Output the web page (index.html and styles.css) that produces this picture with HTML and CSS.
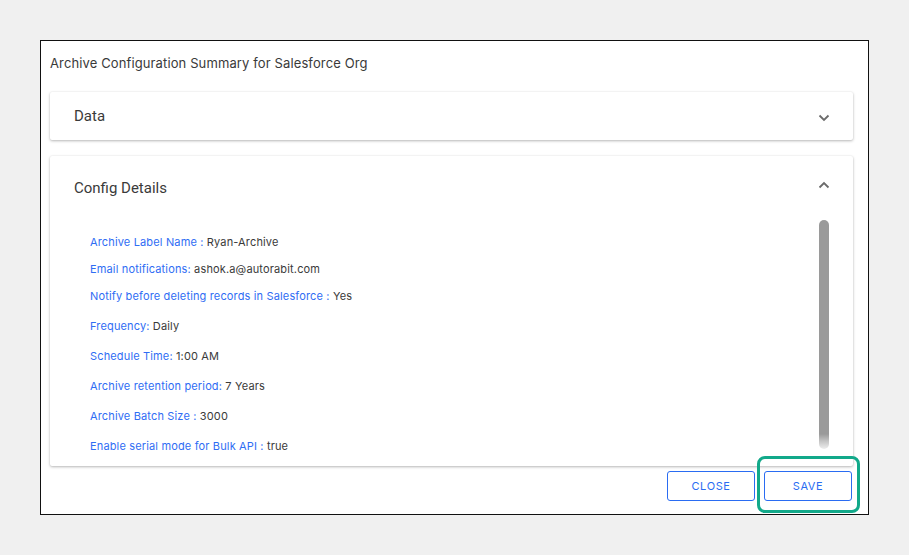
FILE: index.html
```html
<!DOCTYPE html>
<html>
<head>
<meta charset="utf-8">
<link rel="stylesheet" href="styles.css">
</head>
<body>
<div class="dialog">
  <div class="dialog-title">Archive Configuration Summary for Salesforce Org</div>
  <div class="panel panel-data">
    <span class="panel-name">Data</span>
    <svg class="chev" width="12" height="8" viewBox="0 0 12 8"><path d="M1.5 1.5 L6 6 L10.5 1.5" fill="none" stroke="#6b6b6b" stroke-width="1.8"/></svg>
  </div>
  <div class="panel panel-config">
    <div class="config-head">
      <span class="panel-name">Config Details</span>
      <svg class="chev chev-up" width="12" height="8" viewBox="0 0 12 8"><path d="M1.5 6.5 L6 2 L10.5 6.5" fill="none" stroke="#6b6b6b" stroke-width="1.8"/></svg>
    </div>
    <div class="config-body">
      <div class="list">
        <div class="row"><span class="lbl">Archive Label Name : </span>Ryan-Archive</div>
        <div class="row"><span class="lbl">Email notifications: </span>ashok.a@autorabit.com</div>
        <div class="row wide"><span class="lbl">Notify before deleting records in Salesforce : </span>Yes</div>
        <div class="row wide"><span class="lbl">Frequency: </span>Daily</div>
        <div class="row wide"><span class="lbl">Schedule Time: </span>1:00 AM</div>
        <div class="row wide"><span class="lbl">Archive retention period: </span>7 Years</div>
        <div class="row wide"><span class="lbl">Archive Batch Size : </span>3000</div>
        <div class="row wide"><span class="lbl">Enable serial mode for Bulk API : </span>true</div>
      </div>
      <div class="track"><div class="thumb"></div></div>
    </div>
  </div>
  <div class="footer">
    <button class="btn">CLOSE</button>
    <div class="save-wrap">
      <button class="btn">SAVE</button>
      <div class="highlight"></div>
    </div>
  </div>
</div>
</body>
</html>
```
FILE: styles.css
```css
html, body {
  margin: 0;
  padding: 0;
  background: #f0f0f0;
}
body {
  padding: 40px 0 0 40px;
  font-family: Inter, "Noto Sans", sans-serif;
  color: #333;
}
.dialog {
  box-sizing: border-box;
  width: 829px;
  height: 475px;
  background: #fff;
  border: 1px solid #111;
  padding: 14px 15px 0 9px;
  display: flex;
  flex-direction: column;
}
.dialog-title {
  font-size: 13px;
  letter-spacing: 0.12px;
  line-height: 16px;
  color: #3a3a3a;
  margin-bottom: 21px;
}
.panel {
  background: #fff;
  box-shadow: 0 1px 3px rgba(0,0,0,0.28), 0 0 2px rgba(0,0,0,0.06);
  border-radius: 2px;
}
.panel-name {
  font-family: Roboto, sans-serif;
  font-size: 15px;
  color: #3a3a3a;
}
.panel-data {
  height: 48px;
  display: flex;
  align-items: center;
  justify-content: space-between;
  padding: 0 23px 0 24px;
  margin-bottom: 16px;
}
.panel-data .chev { margin-top: 4px; }
.panel-config {
  height: 310px;
  display: flex;
  flex-direction: column;
  overflow: hidden;
}
.config-head {
  height: 64px;
  display: flex;
  align-items: center;
  justify-content: space-between;
  padding: 0 23px 0 24px;
  flex: none;
}
.chev-up { margin-top: -6px; }
.config-body {
  flex: 1;
  display: flex;
  min-height: 0;
}
.list {
  flex: 1;
  padding: 14px 0 0 40px;
  font-size: 11px;
  letter-spacing: 0.15px;
  line-height: 16px;
  color: #3a3a3a;
}
.row { margin-bottom: 11px; white-space: nowrap; }
.row.wide { margin-bottom: 14px; }
.lbl { color: #2f6df4; }
.track {
  width: 10px;
  margin-right: 24px;
  flex: none;
}
.thumb {
  height: 229px;
  border-radius: 5px;
  background: linear-gradient(to bottom, #9a9a9a 0, #9a9a9a 214px, #c4c4c4 221px, #eeeeee 229px);
}
.footer {
  display: flex;
  justify-content: flex-end;
  gap: 9px;
  margin-top: 5px;
  padding-right: 1px;
}
.btn {
  box-sizing: border-box;
  width: 88px;
  height: 30px;
  background: #fff;
  border: 1px solid #2a6cf2;
  border-radius: 3px;
  color: #2a6cf2;
  font-family: Inter, sans-serif;
  font-size: 11px;
  letter-spacing: 0.6px;
  cursor: pointer;
}
.save-wrap {
  position: relative;
}
.highlight {
  position: absolute;
  left: -7px;
  right: -8px;
  top: -15px;
  bottom: -12px;
  border: 3px solid #12a98a;
  border-radius: 8px;
  pointer-events: none;
}
```
